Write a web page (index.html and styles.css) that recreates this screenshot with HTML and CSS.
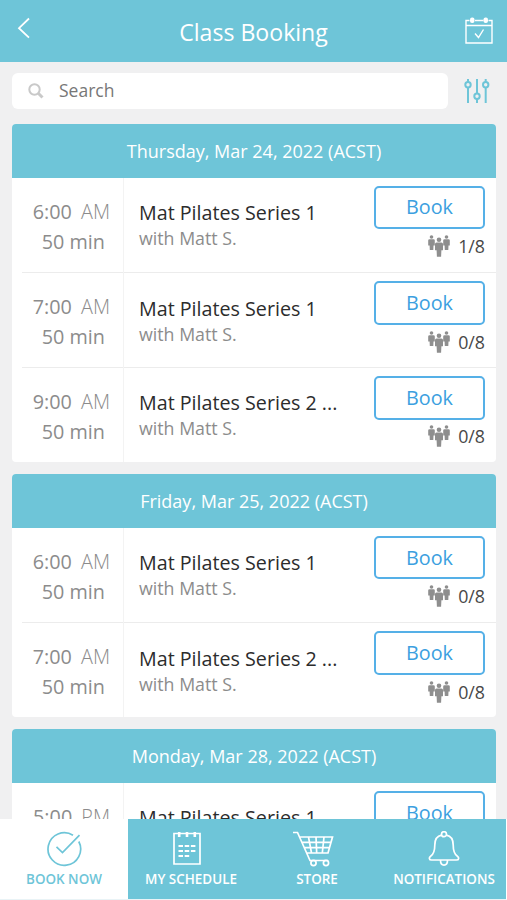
FILE: index.html
```
<!DOCTYPE html>
<html lang="en">
<head>
<meta charset="utf-8">
<title>Class Booking</title>
<link rel="stylesheet" href="styles.css">
</head>
<body>
<svg width="0" height="0" class="defs">
  <symbol id="people" viewBox="0 0 22 22">
    <g fill="currentColor">
      <circle cx="3.500" cy="2" r="1.800"/><path d="M1.500 4.200h4q1.300 0 1.300 1.300v5H5.500l-.2 4.500H1.800l-.2-4.500H.2v-5q0-1.300 1.300-1.300z"/>
      <circle cx="18.500" cy="2" r="1.800"/><path d="M16.500 4.200h4q1.300 0 1.300 1.300v5h-1.300l-.2 4.500h-3.500l-.2-4.500h-1.400v-5q0-1.300 1.300-1.300z"/>
      <circle cx="11" cy="4.700" r="2.300"/><path d="M8.500 7.500h5q1.500 0 1.500 1.500v6.200h-1.600l-.3 6.500H8.900l-.3-6.500H7V9q0-1.500 1.500-1.500z"/>
    </g>
  </symbol>
</svg>
<div class="app">
  <header class="topbar">
    <svg class="back" width="14" height="22" viewBox="0 0 14 22"><path d="M12 1.500 2 11.200 12 20.700"/></svg>
    <h1>Class Booking</h1>
    <svg class="calendar" width="28" height="28" viewBox="0 0 28 28"><path d="M4.500 3.500H1v22.500h26V3.500h-3.500M10 3.500h8.500M1 8.500h26M10 16.500l3.500 4 5-8"/><g class="solid"><rect x="5" y="0.500" width="4.500" height="5.500" rx="2"/><rect x="18.500" y="0.500" width="4.500" height="5.500" rx="2"/></g></svg>
  </header>
  <div class="searchrow">
    <div class="search">
      <svg width="16" height="16" viewBox="0 0 16 16"><circle cx="6.500" cy="6.500" r="5.200"/><path d="m10.500 10.500 4 4" class="handle"/></svg>
      <span>Search</span>
    </div>
    <svg class="filter" width="26" height="26" viewBox="0 0 26 26"><path d="M4 1v3M4 9.500V25M13 1v14.500M13 21v4M21.700 1v3M21.700 9.500V25"/><circle cx="4" cy="6.700" r="2.700"/><circle cx="13" cy="18.300" r="2.700"/><circle cx="21.700" cy="6.700" r="2.700"/></svg>
  </div>
  <main>
    <section class="card tall">
      <h2>Thursday, Mar 24, 2022 (ACST)</h2>
      <div class="row">
        <div class="time"><p>6:00 <i>AM</i></p><p class="dur">50 min</p></div>
        <div class="info"><h3>Mat Pilates Series 1</h3><p>with Matt S.</p></div>
        <div class="action"><button>Book</button><div class="spots"><svg width="22" height="22"><use href="#people"/></svg><span>1/8</span></div></div>
      </div>
      <div class="row">
        <div class="time"><p>7:00 <i>AM</i></p><p class="dur">50 min</p></div>
        <div class="info"><h3>Mat Pilates Series 1</h3><p>with Matt S.</p></div>
        <div class="action"><button>Book</button><div class="spots"><svg width="22" height="22"><use href="#people"/></svg><span>0/8</span></div></div>
      </div>
      <div class="row">
        <div class="time"><p>9:00 <i>AM</i></p><p class="dur">50 min</p></div>
        <div class="info"><h3>Mat Pilates Series 2 ...</h3><p>with Matt S.</p></div>
        <div class="action"><button>Book</button><div class="spots"><svg width="22" height="22"><use href="#people"/></svg><span>0/8</span></div></div>
      </div>
    </section>
    <section class="card">
      <h2>Friday, Mar 25, 2022 (ACST)</h2>
      <div class="row">
        <div class="time"><p>6:00 <i>AM</i></p><p class="dur">50 min</p></div>
        <div class="info"><h3>Mat Pilates Series 1</h3><p>with Matt S.</p></div>
        <div class="action"><button>Book</button><div class="spots"><svg width="22" height="22"><use href="#people"/></svg><span>0/8</span></div></div>
      </div>
      <div class="row">
        <div class="time"><p>7:00 <i>AM</i></p><p class="dur">50 min</p></div>
        <div class="info"><h3>Mat Pilates Series 2 ...</h3><p>with Matt S.</p></div>
        <div class="action"><button>Book</button><div class="spots"><svg width="22" height="22"><use href="#people"/></svg><span>0/8</span></div></div>
      </div>
    </section>
    <section class="card">
      <h2>Monday, Mar 28, 2022 (ACST)</h2>
      <div class="row">
        <div class="time"><p>5:00 <i>PM</i></p></div>
        <div class="info"><h3>Mat Pilates Series 1</h3></div>
        <div class="action"><button>Book</button></div>
      </div>
    </section>
  </main>
  <nav class="tabs">
    <a class="active"><svg width="36" height="36" viewBox="0 0 36 36"><path d="M27 4.200A16.300 16.300 0 1 0 32.800 10.500M10.500 15.800l6 5.700L33.500 4.200"/></svg><span>BOOK NOW</span></a>
    <a><svg class="pad" width="36" height="36" viewBox="0 0 36 36"><path d="M5 2.500h26V33H5z"/><path d="M10.200 1v5M18 1v5M25.800 1v5" class="ring"/><path d="M9.500 15h17M9.500 20h17M9.500 25h11.500" class="dash"/></svg><span>MY SCHEDULE</span></a>
    <a><svg class="cart" width="42" height="36" viewBox="0 0 42 36"><path d="M1 1.500h4.500L18 29.500h18M7.500 6h33L36 22H14.700M10 11.300h29M12.400 16.700h25M16.500 6l3 16M24 6l.7 16M32 6l-1.700 16"/><circle cx="21.500" cy="32" r="2.600"/><circle cx="34" cy="32" r="2.600"/></svg><span>STORE</span></a>
    <a><svg width="32" height="36" viewBox="0 0 32 36"><path d="M13.600 4.200C8.300 5.200 6.800 9.500 6.800 14c0 6-.8 9-4.200 11.200-1.800 1.200-1.800 3.800 1 3.800h24.800c2.800 0 2.800-2.600 1-3.800-3.400-2.200-4.200-5.200-4.200-11.200 0-4.500-1.500-8.800-6.800-9.800M12.500 29.300c0 6.500 7 6.500 7 0"/><circle cx="16" cy="3.200" r="2.500"/></svg><span>NOTIFICATIONS</span></a>
  </nav>
</div>
</body>
</html>
```
FILE: styles.css
```
* { box-sizing: border-box; margin: 0; padding: 0; }
body { font-family: "Open Sans", "Noto Sans", sans-serif; background: #f0f0f1; overflow: hidden; }
svg { display: block; fill: none; stroke: currentColor; flex: none; }
.defs { position: absolute; }
.app { width: 507px; height: 900px; display: flex; flex-direction: column; overflow: hidden; }
.topbar { height: 61.500px; flex: none; background: #6ec5d8; color: #fff; display: grid; grid-template-columns: 60px 1fr 60px; align-items: start; }
.topbar h1 { font-size: 23.100px; font-weight: 400; line-height: 32px; margin-top: 15.500px; text-align: center; white-space: nowrap; }
.back { margin: 17px 0 0 17px; stroke-width: 1.800; }
.calendar { margin: 17px 0 0 17.500px; stroke-width: 1.400; }
.calendar .solid { fill: currentColor; stroke: none; }
.searchrow { flex: none; display: flex; padding: 11px 0 0 12px; height: 62px; }
.search { width: 436px; height: 36px; border-radius: 6px; background: #fff; display: flex; align-items: center; padding: 0 0 1px 16px; gap: 15px; color: #777; font-size: 17.500px; }
.search svg { stroke: #c9c9c9; stroke-width: 2; position: relative; top: 1px; }
.search .handle { stroke-width: 3; }
.filter { margin: 5px 0 0 16px; color: #6ec5d8; stroke-width: 2; }
main { flex: 1; min-height: 0; overflow: hidden; padding: 0 11px 0 12px; }
.card { background: #fff; border-radius: 4px; overflow: hidden; margin-bottom: 12px; }
.card h2 { height: 54px; line-height: 54px; background: #6ec5d8; color: #fff; font-size: 18px; font-weight: 400; text-align: center; }
.row { height: 94.500px; display: grid; grid-template-columns: 112px 1fr 122px; }
.tall .row { height: 94.830px; }
.row + .row { background: linear-gradient(#ececec, #ececec) 10px 0 / 100% 1px no-repeat; }
.time { border-right: 1px solid #f3f3f3; color: #8c8c8c; font-size: 19.800px; line-height: 30px; padding: 19px 13px 0 0; text-align: right; white-space: nowrap; }
.row + .row .time { padding-top: 20px; }
.time i { font-style: normal; font-weight: 300; margin-left: 4px; }
.time .dur { padding-right: 5px; }
.info { padding: 21.500px 0 0 15px; white-space: nowrap; }
.row + .row .info { padding-top: 22.200px; }
.info h3 { font-size: 19.700px; font-weight: 400; line-height: 28px; color: #2c2c2c; }
.info p { font-size: 17.800px; line-height: 22px; color: #8c8c8c; }
.action { padding: 8px 11px 0 0; }
.row + .row .action { padding-top: 9px; }
.action button { display: block; width: 111px; height: 43.500px; border: 2px solid #55b0e7; border-radius: 5px; background: #fff; color: #3c9fe0; font: 400 19.800px/38px "Open Sans", sans-serif; }
.spots { display: flex; justify-content: flex-end; gap: 8px; color: #484848; font-size: 17.800px; line-height: 24px; margin-top: 4.700px; }
.spots svg { color: #8e8e8e; stroke: none; margin-top: 1px; }
.tabs { flex: none; height: 81px; border-bottom: 1px solid #e9f3f6; border-right: 1px solid #fff; display: grid; grid-template-columns: 128px 126px 126px 1fr; background: #6ec5d8; color: #fff; }
.tabs a { display: flex; flex-direction: column; align-items: center; padding-top: 12px; }
.tabs a:last-child { padding-left: 2px; }
.tabs svg { stroke-width: 1.700; }
.tabs .pad { margin-right: 8px; }
.tabs .cart { margin-right: 9px; }
.tabs .ring { stroke-width: 2.600; }
.tabs .dash { stroke-width: 2; stroke-dasharray: 4.500 1.700; }
.tabs span { font-size: 13.450px; font-weight: 600; line-height: 18px; margin-top: 3px; white-space: nowrap; }
.tabs .active { background: #fff; color: #6ec5d8; }
```
